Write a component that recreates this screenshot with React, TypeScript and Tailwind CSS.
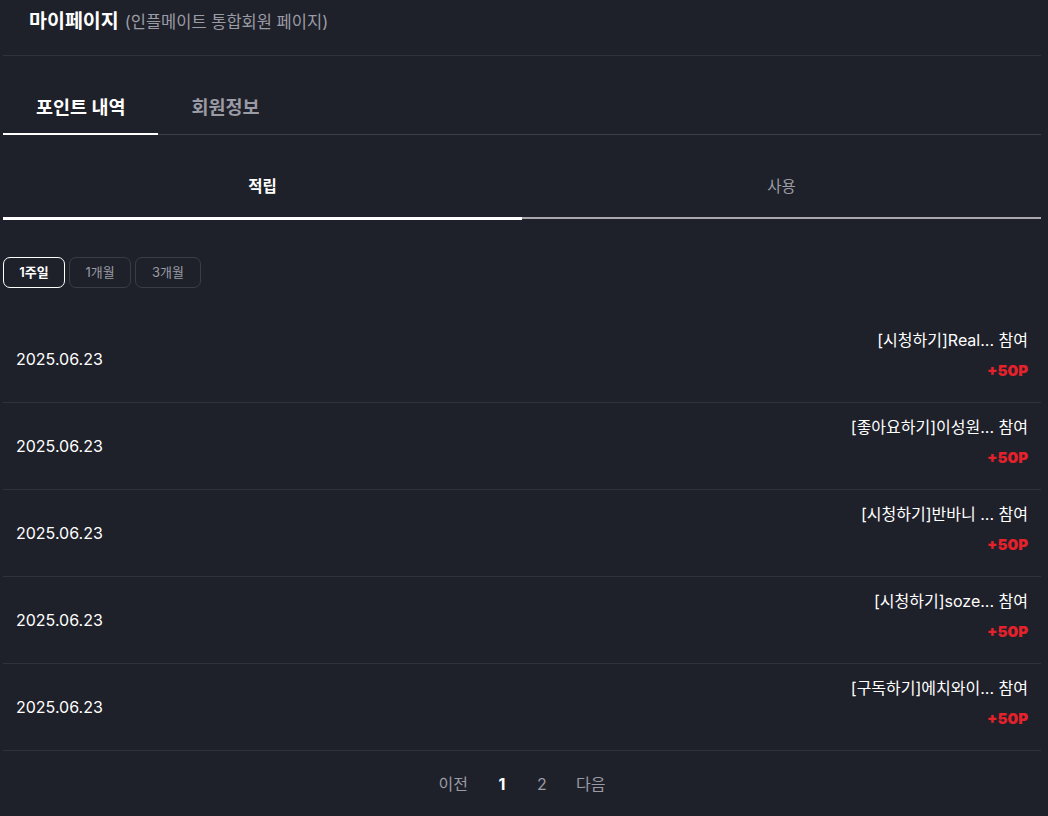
import React from "react";

const rows = [
  "[시청하기]Real... 참여",
  "[좋아요하기]이성원... 참여",
  "[시청하기]반바니 ... 참여",
  "[시청하기]soze... 참여",
  "[구독하기]에치와이... 참여",
];

export default function App() {
  return (
    <div
      className="min-h-[816px] w-[1048px] bg-[#1f212a] text-white"
      style={{ fontFamily: '"Inter", "Noto Sans CJK KR", sans-serif' }}
    >
      <div className="pl-[3px] pr-[7px]">
        {/* header */}
        <div className="flex h-[56px] items-start border-b border-[#30323c] pl-[26px] pt-[7px]">
          <span className="text-[19.5px] font-bold leading-[28px]">마이페이지</span>
          <span className="ml-[6px] text-[16.5px] leading-[30px] text-[#9a9ba4]">
            (인플메이트 통합회원 페이지)
          </span>
        </div>

        {/* main tabs */}
        <div className="flex border-b border-[#3c3e48] pt-[22px]">
          <div className="-mb-px border-b-2 border-white px-[33px] pt-[15px] pb-[12px] text-[18.5px] font-bold leading-[28px] text-white">
            포인트 내역
          </div>
          <div className="px-[33px] pt-[15px] pb-[12px] text-[18.5px] font-bold leading-[28px] text-[#9a9ba4]">
            회원정보
          </div>
        </div>

        {/* sub tabs */}
        <div className="flex items-start">
          <div className="flex flex-1 justify-center border-b-[3px] border-white pt-[41px] pb-[19px] text-[15.5px] font-bold leading-[22px] text-white">
            적립
          </div>
          <div className="flex flex-1 justify-center border-b-2 border-[#a9a9ad] pt-[41px] pb-[19px] text-[15.5px] leading-[22px] text-[#9a9ba4]">
            사용
          </div>
        </div>

        {/* filters */}
        <div className="mt-[37px] flex gap-[4px]">
          <button className="flex h-[31px] w-[62px] items-center justify-center rounded-[7px] border border-white text-[13px] font-semibold text-white">
            1주일
          </button>
          <button className="flex h-[31px] w-[62px] items-center justify-center rounded-[7px] border border-[#3a3c47] text-[13px] text-[#9a9ba4]">
            1개월
          </button>
          <button className="flex h-[31px] w-[66px] items-center justify-center rounded-[7px] border border-[#3a3c47] text-[13px] text-[#9a9ba4]">
            3개월
          </button>
        </div>

        {/* list */}
        <div className="mt-[28px]">
          {rows.map((t, i) => (
            <div
              key={i}
              className="flex items-center justify-between border-b border-[#30323c] pl-[13px] pr-[13px]"
            >
              <div className="text-[16px] font-normal leading-[24px] text-white">2025.06.23</div>
              <div className="flex flex-col items-end pt-[12px] pb-[21px]">
                <div className="text-[16px] leading-[24px] text-white">{t}</div>
                <div className="mt-[9px] text-[15px] font-black leading-[20px] text-[#e5212b]">
                  +50P
                </div>
              </div>
            </div>
          ))}
        </div>

        {/* pagination */}
        <div className="flex items-center justify-center gap-[14px] pt-[21px] pb-[10px] text-[16px] leading-[24px] text-[#9a9ba4]">
          <span>이전</span>
          <div className="flex">
            <span className="w-[40px] text-center font-bold text-white">1</span>
            <span className="w-[40px] text-center">2</span>
          </div>
          <span>다음</span>
        </div>
      </div>
    </div>
  );
}
